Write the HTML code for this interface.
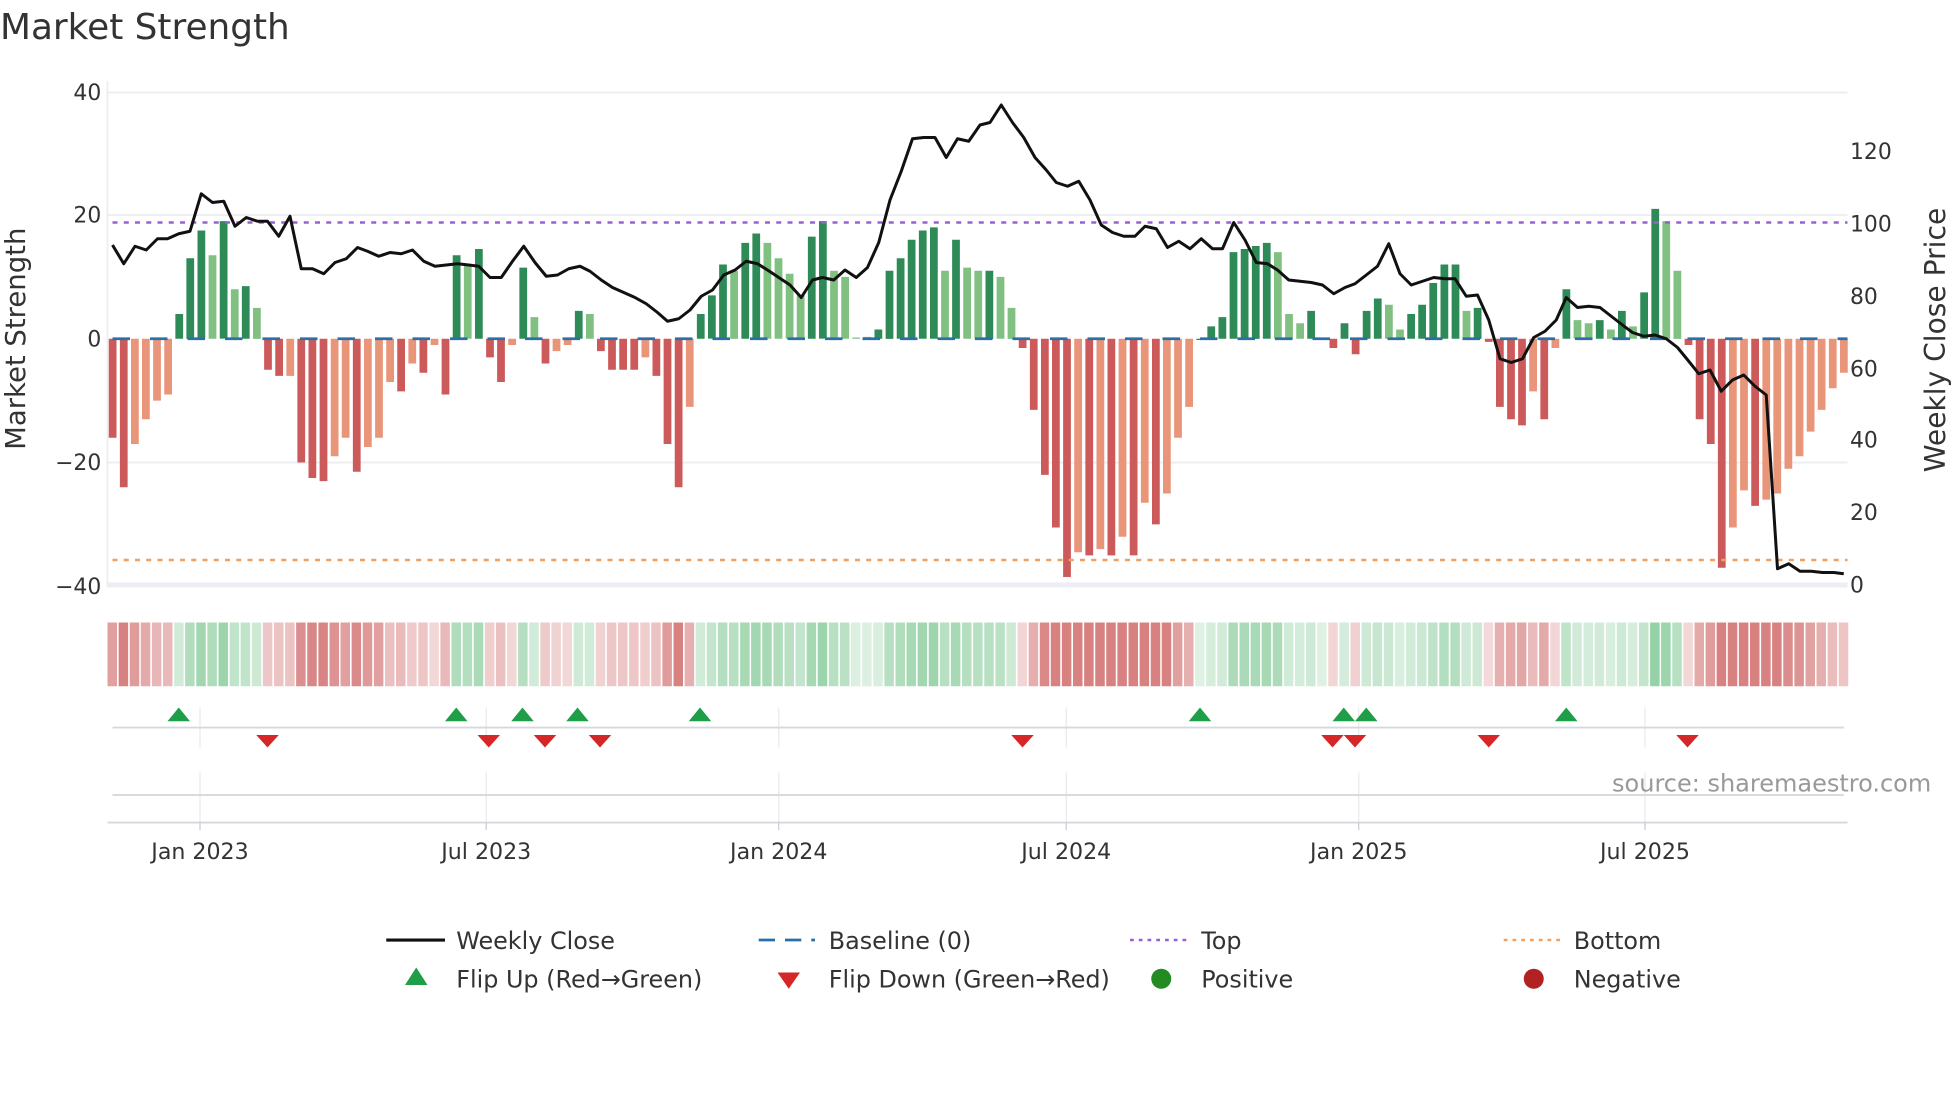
<!DOCTYPE html>
<html><head><meta charset="utf-8"><style>
html,body{margin:0;padding:0;background:#fff;width:1960px;height:1102px;overflow:hidden}
svg{display:block}
text{font-family:"DejaVu Sans","Liberation Sans",sans-serif;fill:#333}
</style></head><body>
<svg id="s" width="1960" height="1102" viewBox="0 0 1568 881.6" xmlns="http://www.w3.org/2000/svg">
<rect width="1568" height="882" fill="#fff"/>
<text x="0" y="31" font-size="28.7" fill="#333">Market Strength</text>
<g stroke="#eceef2" stroke-width="1.5">
<line x1="86" y1="74" x2="1478" y2="74"/>
<line x1="86" y1="172" x2="1478" y2="172"/>
<line x1="86" y1="370" x2="1478" y2="370"/>
<line x1="86" y1="65" x2="86" y2="470"/>
</g>
<line x1="86" y1="468" x2="1478" y2="468" stroke="#eceef4" stroke-width="4"/>
<g id="bars"></g>
<line x1="90" y1="178" x2="1478" y2="178" stroke="#9b5fd6" stroke-width="2" stroke-dasharray="4,5"/>
<line x1="90" y1="448" x2="1478" y2="448" stroke="#f0a060" stroke-width="2" stroke-dasharray="4,5"/>
<line x1="90" y1="271" x2="1478" y2="271" stroke="#2a6fa8" stroke-width="2.2" stroke-dasharray="14,16"/>
<polyline id="price" fill="none" stroke="#111" stroke-width="2.4" stroke-linejoin="round"/>
<g id="strip"></g>
<g font-size="17.5" text-anchor="end">
<text x="81" y="80">40</text><text x="81" y="178">20</text><text x="81" y="277">0</text>
<text x="81" y="376">−20</text><text x="81" y="475">−40</text>
</g>
<g font-size="17.5">
<text x="1480" y="127">120</text><text x="1480" y="185">100</text><text x="1480" y="243">80</text>
<text x="1480" y="301">60</text><text x="1480" y="358">40</text><text x="1480" y="416">20</text>
<text x="1480" y="474">0</text>
</g>
<text transform="translate(20,271) rotate(-90)" font-size="22" text-anchor="middle">Market Strength</text>
<text transform="translate(1556,272) rotate(-90)" font-size="22.5" text-anchor="middle">Weekly Close Price</text>
<g stroke="#e8eaee" stroke-width="1">
<line x1="160" y1="566" x2="160" y2="598"/><line x1="160" y1="618" x2="160" y2="658"/>
<line x1="389" y1="566" x2="389" y2="598"/><line x1="389" y1="618" x2="389" y2="658"/>
<line x1="623" y1="566" x2="623" y2="598"/><line x1="623" y1="618" x2="623" y2="658"/>
<line x1="853" y1="566" x2="853" y2="598"/><line x1="853" y1="618" x2="853" y2="658"/>
<line x1="1087" y1="566" x2="1087" y2="598"/><line x1="1087" y1="618" x2="1087" y2="658"/>
<line x1="1316" y1="566" x2="1316" y2="598"/><line x1="1316" y1="618" x2="1316" y2="658"/>
</g>
<line x1="90" y1="582" x2="1475" y2="582" stroke="#d5d8dc" stroke-width="1.5"/>
<line x1="90" y1="636" x2="1475" y2="636" stroke="#d5d8dc" stroke-width="1.5"/>
<line x1="86" y1="658" x2="1478" y2="658" stroke="#d5d8dc" stroke-width="1.5"/>
<g stroke="#c8cbd0"><line x1="160" y1="658" x2="160" y2="664"/><line x1="389" y1="658" x2="389" y2="664"/><line x1="623" y1="658" x2="623" y2="664"/><line x1="853" y1="658" x2="853" y2="664"/><line x1="1087" y1="658" x2="1087" y2="664"/><line x1="1316" y1="658" x2="1316" y2="664"/></g>
<g id="flips"></g>
<g font-size="17.7" text-anchor="middle">
<text x="160" y="687">Jan 2023</text><text x="389" y="687">Jul 2023</text><text x="623" y="687">Jan 2024</text>
<text x="853" y="687">Jul 2024</text><text x="1087" y="687">Jan 2025</text><text x="1316" y="687">Jul 2025</text>
</g>
<text x="1545" y="633" font-size="19.2" text-anchor="end" style="fill:#999">source: sharemaestro.com</text>
<g font-size="19.1">
<line x1="309" y1="752" x2="356" y2="752" stroke="#111" stroke-width="2.5"/><text x="365" y="759">Weekly Close</text>
<line x1="607" y1="752" x2="652" y2="752" stroke="#2a6fa8" stroke-width="2.2" stroke-dasharray="13,8"/><text x="663" y="759">Baseline (0)</text>
<line x1="904" y1="752" x2="950" y2="752" stroke="#9b5fd6" stroke-width="2" stroke-dasharray="3,4"/><text x="961" y="759">Top</text>
<line x1="1203" y1="752" x2="1249" y2="752" stroke="#f0a060" stroke-width="2" stroke-dasharray="3,4"/><text x="1259" y="759">Bottom</text>
<polygon points="324,788 342,788 333,774" fill="#1e9e46"/><text x="365" y="790">Flip Up (Red→Green)</text>
<polygon points="622,778 640,778 631,791" fill="#d62728"/><text x="663" y="790">Flip Down (Green→Red)</text>
<circle cx="929" cy="783" r="8" fill="#228b22"/><text x="961" y="790">Positive</text>
<circle cx="1227" cy="783" r="8" fill="#b22222"/><text x="1259" y="790">Negative</text>
</g>
</svg>
<script>
var V=[[-16,'r'],[-24,'r'],[-17,'o'],[-13,'o'],[-10,'o'],[-9,'o'],[4,'g'],[13,'g'],[17.5,'g'],[13.5,'l'],[19,'g'],[8,'l'],[8.5,'g'],[5,'l'],[-5,'r'],[-6,'r'],[-6,'o'],[-20,'r'],[-22.5,'r'],[-23,'r'],[-19,'o'],[-16,'o'],[-21.5,'r'],[-17.5,'o'],[-16,'o'],[-7,'o'],[-8.5,'r'],[-4,'o'],[-5.5,'r'],[-1,'o'],[-9,'r'],[13.5,'g'],[12,'l'],[14.5,'g'],[-3,'r'],[-7,'r'],[-1,'o'],[11.5,'g'],[3.5,'l'],[-4,'r'],[-2,'o'],[-1,'o'],[4.5,'g'],[4,'l'],[-2,'r'],[-5,'r'],[-5,'r'],[-5,'r'],[-3,'o'],[-6,'r'],[-17,'r'],[-24,'r'],[-11,'o'],[4,'g'],[7,'g'],[12,'g'],[11,'l'],[15.5,'g'],[17,'g'],[15.5,'l'],[13,'l'],[10.5,'l'],[7,'l'],[16.5,'g'],[19,'g'],[11,'l'],[10,'l'],[0.2,'l'],[0.3,'l'],[1.5,'g'],[11,'g'],[13,'g'],[16,'g'],[17.5,'g'],[18,'g'],[11,'l'],[16,'g'],[11.5,'l'],[11,'l'],[11,'g'],[10,'l'],[5,'l'],[-1.5,'r'],[-11.5,'r'],[-22,'r'],[-30.5,'r'],[-38.5,'r'],[-34.5,'o'],[-35,'r'],[-34,'o'],[-35,'r'],[-32,'o'],[-35,'r'],[-26.5,'o'],[-30,'r'],[-25,'o'],[-16,'o'],[-11,'o'],[0,'g'],[2,'g'],[3.5,'g'],[14,'g'],[14.5,'g'],[15,'g'],[15.5,'g'],[14,'l'],[4,'l'],[2.5,'l'],[4.5,'g'],[0,'g'],[-1.5,'r'],[2.5,'g'],[-2.5,'r'],[4.5,'g'],[6.5,'g'],[5.5,'l'],[1.5,'l'],[4,'g'],[5.5,'g'],[9,'g'],[12,'g'],[12,'g'],[4.5,'l'],[5,'g'],[-0.5,'r'],[-11,'r'],[-13,'r'],[-14,'r'],[-8.5,'o'],[-13,'r'],[-1.5,'o'],[8,'g'],[3,'l'],[2.5,'l'],[3,'g'],[1.5,'l'],[4.5,'g'],[2,'l'],[7.5,'g'],[21,'g'],[19,'l'],[11,'l'],[-1,'r'],[-13,'r'],[-17,'r'],[-37,'r'],[-30.5,'o'],[-24.5,'o'],[-27,'r'],[-26,'o'],[-25,'o'],[-21,'o'],[-19,'o'],[-15,'o'],[-11.5,'o'],[-8,'o'],[-5.5,'o']];
var C={r:'#cc5a5a',o:'#e8957a',g:'#2e8b57',l:'#80c080'};
var n=V.length,x0=90,x1=1475,dx=(x1-x0)/(n-1),b='',st='';
for(var i=0;i<n;i++){var v=V[i][0],x=x0+i*dx,h=Math.abs(v)*4.95,y=v>=0?271-h:271;
b+='<rect x="'+(x-3).toFixed(1)+'" y="'+y.toFixed(1)+'" width="6.2" height="'+Math.max(h,1).toFixed(1)+'" fill="'+C[V[i][1]]+'"/>';
var s=V[i][1]=='g'||V[i][1]=='l'?1:-1;var a=Math.min(0.25+Math.abs(v)/40,0.85);
var col=s>0?'rgba(60,170,90,'+(a*0.7).toFixed(2)+')':'rgba(200,80,80,'+(a*0.85).toFixed(2)+')';
st+='<rect x="'+(x-4).toFixed(1)+'" y="498" width="'+(dx-1.3).toFixed(1)+'" height="51" fill="'+col+'"/>';}
document.getElementById('bars').innerHTML=b;document.getElementById('strip').innerHTML=st;
var P=[[90,196],[99,211],[108,197],[117,200],[126,191],[134,191],[143,187],[152,185],[161,155],[170,162],[179,161],[188,181],[197,174],[206,177],[214,177],[223,189],[232,173],[241,215],[250,215],[259,219],[268,210],[277,207],[286,198],[294,201],[303,205],[312,202],[321,203],[330,200],[339,209],[348,213],[357,212],[366,211],[375,212],[383,213],[392,222],[401,222],[410,209],[419,197],[428,210],[437,221],[446,220],[455,215],[464,213],[472,217],[481,224],[490,230],[499,234],[508,238],[517,243],[526,250],[534,257],[543,255],[552,248],[561,237],[570,232],[579,220],[588,216],[597,209],[606,211],[614,216],[623,222],[632,228],[641,238],[650,224],[658,222],[667,224],[676,216],[685,222],[694,214],[703,194],[712,160],[721,137],[730,111],[739,110],[748,110],[757,126],[766,111],[775,113],[784,100],[792,98],[801,84],[810,98],[819,110],[828,126],[837,136],[845,146],[854,149],[863,145],[872,160],[881,180],[890,186],[899,189],[908,189],[916,181],[925,183],[934,198],[943,193],[952,199],[961,191],[970,199],[978,199],[987,178],[996,192],[1005,210],[1014,211],[1022,216],[1031,224],[1040,225],[1049,226],[1058,228],[1067,235],[1076,230],[1084,227],[1093,220],[1102,213],[1111,195],[1120,219],[1129,228],[1138,225],[1147,222],[1156,223],[1164,223],[1173,237],[1182,236],[1191,256],[1200,287],[1209,290],[1218,287],[1227,270],[1236,265],[1245,256],[1253,238],[1262,246],[1271,245],[1280,246],[1289,253],[1298,260],[1306,266],[1315,269],[1324,268],[1333,271],[1342,278],[1351,289],[1359,299],[1368,296],[1377,313],[1386,304],[1395,300],[1404,309],[1413,316],[1422,455],[1431,451],[1440,457],[1449,457],[1458,458],[1467,458],[1475,459]];
document.getElementById('price').setAttribute('points',P.map(function(p){return p.join(',')}).join(' '));
var U=[143,365,418,462,560,960,1075,1093,1253],D=[214,391,436,480,818,1066,1084,1191,1350],f='';
U.forEach(function(x){f+='<polygon points="'+(x-9)+',577 '+(x+9)+',577 '+x+',566" fill="#1e9e46"/>';});
D.forEach(function(x){f+='<polygon points="'+(x-9)+',588 '+(x+9)+',588 '+x+',598" fill="#d62728"/>';});
document.getElementById('flips').innerHTML=f;
</script>
</body></html>
